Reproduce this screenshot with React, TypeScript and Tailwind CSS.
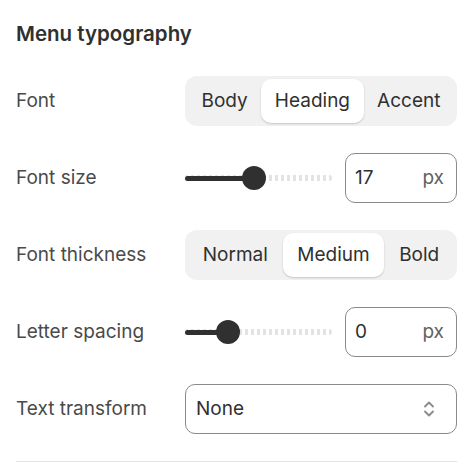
import { useState } from "react";

const segBase =
  "flex-auto h-full flex items-center justify-center px-3 rounded-[10px] text-[19px] text-[#303030]";

function Segmented({ options, value }: { options: string[]; value: string }) {
  return (
    <div className="w-[272px] h-[50px] bg-[#f1f1f1] rounded-[12px] p-[3px] flex">
      {options.map((o) => (
        <div
          key={o}
          className={
            o === value
              ? segBase + " bg-white shadow-[0_1px_2px_rgba(0,0,0,0.18)]"
              : segBase
          }
        >
          {o}
        </div>
      ))}
    </div>
  );
}

function Slider({ pct, value }: { pct: number; value: string }) {
  return (
    <div className="w-[272px] h-[50px] flex items-center gap-[13px]">
      <div className="relative w-[147px] h-[24px] flex items-center">
        <div className="absolute left-0 right-0 h-[6px] rounded-full bg-[repeating-linear-gradient(90deg,#e3e3e3_0_3px,transparent_3px_6px)]" />
        <div
          className="absolute left-0 h-[5px] rounded-full bg-[#303030]"
          style={{ width: `${pct}%` }}
        />
        <div
          className="absolute w-[24px] h-[24px] -ml-[12px] rounded-full bg-[#303030]"
          style={{ left: `${pct}%` }}
        />
      </div>
      <div className="flex-1 h-[50px] rounded-[10px] border border-[#8a8a8a] flex items-center justify-between pl-[9px] pr-[12px] text-[19px]">
        <span className="text-[#303030]">{value}</span>
        <span className="text-[#616161]">px</span>
      </div>
    </div>
  );
}

function Row({ label, children }: { label: string; children: React.ReactNode }) {
  return (
    <div className="flex items-center h-[50px]">
      <div className="w-[169px] text-[19px] text-[#4a4a4a]">{label}</div>
      {children}
    </div>
  );
}

export default function App() {
  const [transform] = useState("None");
  return (
    <div className="w-[470px] h-[466px] bg-white px-4 pt-[21px] font-['Inter',sans-serif] overflow-hidden">
      <h2 className="text-[20.5px] leading-[26px] font-semibold text-[#303030]">
        Menu typography
      </h2>
      <div className="mt-[29px] flex flex-col gap-[27px] w-[441px]">
        <Row label="Font">
          <Segmented options={["Body", "Heading", "Accent"]} value="Heading" />
        </Row>
        <Row label="Font size">
          <Slider pct={47} value="17" />
        </Row>
        <Row label="Font thickness">
          <Segmented options={["Normal", "Medium", "Bold"]} value="Medium" />
        </Row>
        <Row label="Letter spacing">
          <Slider pct={29.5} value="0" />
        </Row>
        <Row label="Text transform">
          <div className="w-[272px] h-[50px] rounded-[10px] border border-[#8a8a8a] flex items-center justify-between pl-[10px] pr-[20px] text-[19px] text-[#303030]">
            <span>{transform}</span>
            <svg width="14" height="20" viewBox="0 0 14 20" fill="none" stroke="#8a8a8a" strokeWidth="1.8" strokeLinecap="round" strokeLinejoin="round">
              <path d="M3 7.5 7 3.5 11 7.5" />
              <path d="M3 12.5 7 16.5 11 12.5" />
            </svg>
          </div>
        </Row>
      </div>
      <div className="mt-[27px] border-t border-[#e3e3e3] w-[441px]" />
    </div>
  );
}
